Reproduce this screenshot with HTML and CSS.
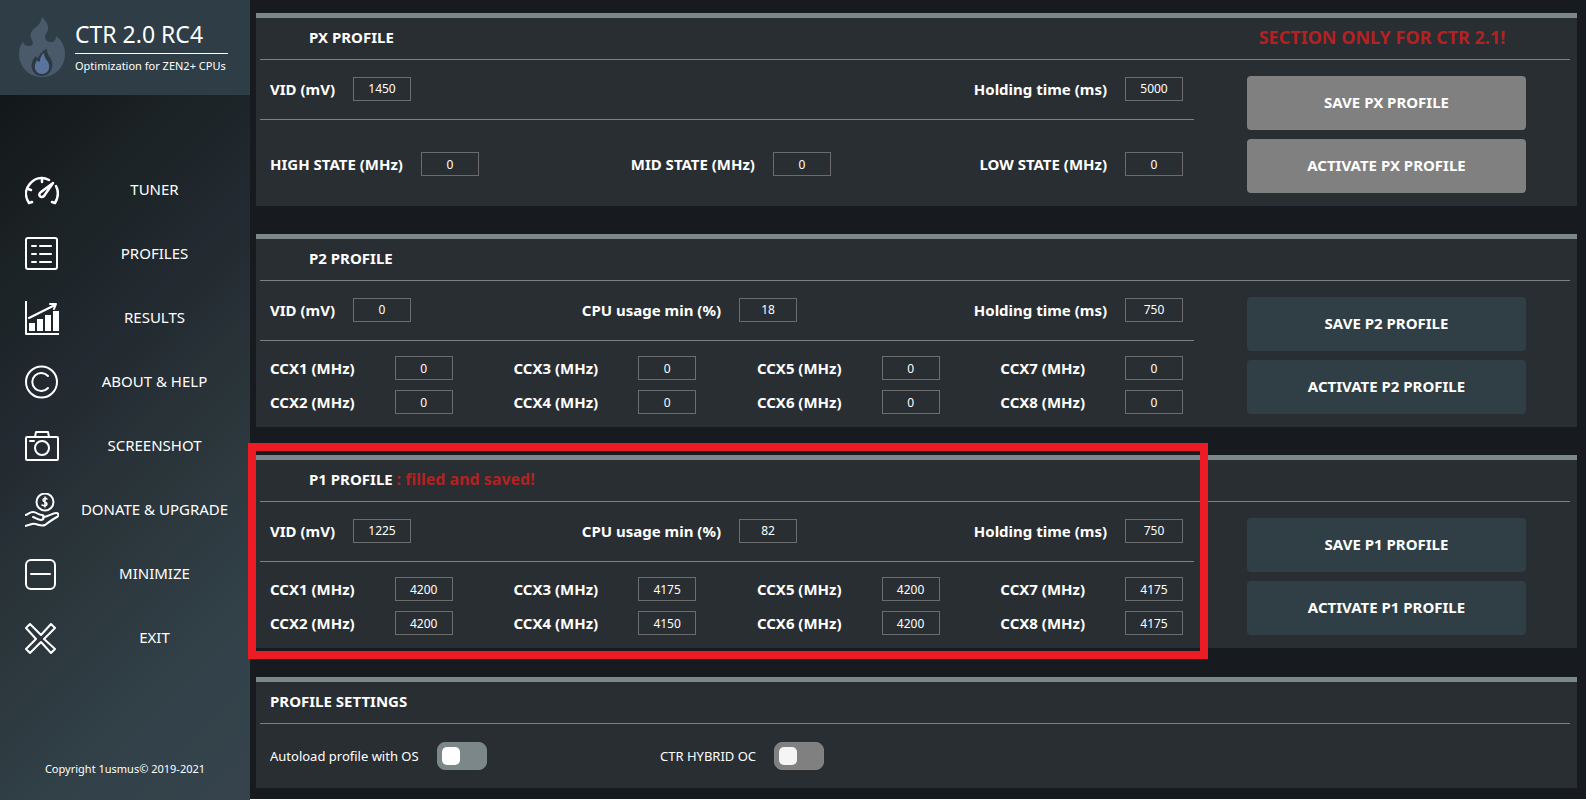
FILE: index.html
```html
<!DOCTYPE html>
<html lang="en">
<head>
	<meta charset="utf-8">
	<title>CTR 2.0 RC4</title>
	<link rel="stylesheet" href="styles.css">
</head>
<body>
<div class="app">
	<div class="sidebar">
		<div class="brand">
			<svg class="logo" viewBox="0 0 48 62" width="48" height="62">
				<path fill="#4a5a6a" d="M24 1c4 4 7 9 6 13c-1 3-3 4-3 7c0 3 3 5 6 5c3 0 5-2 5-6c6 4 9 11 9 18c0 13-10 23-23 23s-23-10-23-23c0-5 1-9 4-12c1 3 3 4 6 4c3 0 5-2 3-6c-2-3-2-6 0-9c3-4 9-6 10-14z"/>
				<path fill="#2c3942" d="M29 33c0 5 2 7 4 10c4 8-1 17-9 17s-13-8-9-16c1-2 2-3 3-4c1 2 1 2 2 2c2-3 4-8 9-9z"/>
				<path fill="#59739d" d="M26 37c0 4 2 6 4 9c3 6 0 12-6 12s-9-6-6-12l1-2c1 2 2 2 3 1c0-3 2-7 4-8z"/>
			</svg>
			<div class="brand_text">
				<h1>CTR 2.0 RC4</h1>
				<p>Optimization for ZEN2+ CPUs</p>
			</div>
		</div>
		<nav class="menu">
			<button type="button">
				<svg viewBox="0 0 34 34" width="34" height="34">
					<path class="thick" d="M7 29l-3 1C0 24 0 17 4 12C9 5 17 3 24 7M27 29l3 1c3-5 4-11 1-17"/>
					<path class="thick" d="M17 5v4M3 16l3 1"/>
					<path class="thick" d="M28 10L16 19c-4 3 0 7 3 4z"/>
				</svg>
				<span>TUNER</span>
			</button>
			<button type="button">
				<svg viewBox="0 0 34 34" width="34" height="34">
					<rect x="1" y="1" width="31" height="31" rx="2"/>
					<path d="M7 9h4M15 9h11M7 17h4M15 17h11M7 25h4M15 25h11"/>
				</svg>
				<span>PROFILES</span>
			</button>
			<button type="button">
				<svg viewBox="0 0 34 34" width="34" height="34">
					<path d="M1 0v33h33M4 17L30 4M25 3h6l-2 5"/>
					<path class="solid" d="M4 22h6v8H4zM12 18h6v12h-6zM20 14h6v16h-6zM28 10h6v20h-6z"/>
				</svg>
				<span>RESULTS</span>
			</button>
			<button type="button">
				<svg viewBox="0 0 34 34" width="34" height="34">
					<circle cx="16.500" cy="17" r="15.500"/>
					<path d="M23 11a9 9 0 1 0 0 12"/>
				</svg>
				<span>ABOUT &amp; HELP</span>
			</button>
			<button type="button">
				<svg viewBox="0 0 34 34" width="34" height="34">
					<rect x="1" y="8" width="32" height="23" rx="1"/>
					<path d="M10 8l1-5h12l1 5M5 12h4"/>
					<circle cx="17" cy="19" r="7"/>
				</svg>
				<span>SCREENSHOT</span>
			</button>
			<button type="button">
				<svg viewBox="0 0 34 34" width="34" height="34">
					<circle cx="20" cy="9" r="8.500"/>
					<path class="thin" d="M22 6c-1-1-4-1-4 1s4 2 4 4s-3 2-5 1M20 4v10"/>
					<path d="M0 22c3 0 4-3 8-3c4 0 5 3 9 3c3 0 2 5-1 5c-3 0-5-2-8-3M18 24c5 0 9-4 13-4c3 0 3 3 1 4c-4 2-8 5-12 8c-5 2-8-2-13-1l-7 2"/>
				</svg>
				<span>DONATE &amp; UPGRADE</span>
			</button>
			<button type="button">
				<svg viewBox="0 0 34 34" width="34" height="34">
					<rect x="1" y="3" width="29" height="29" rx="5"/>
					<path d="M6 17h19"/>
				</svg>
				<span>MINIMIZE</span>
			</button>
			<button type="button">
				<svg viewBox="0 0 34 34" width="34" height="34">
					<path d="M5 3l11 11L26 3l4 4l-11 11l11 10l-4 4l-10-11L5 32l-4-4l10-10L1 7z"/>
				</svg>
				<span>EXIT</span>
			</button>
		</nav>
		<p class="copyright">Copyright 1usmus© 2019-2021</p>
	</div>

	<div class="content">
		<section class="panel">
			<div class="panel_head">
				<h2>PX PROFILE</h2>
				<p class="notice">SECTION ONLY FOR CTR 2.1!</p>
			</div>
			<div class="panel_body">
				<div class="fields">
					<div class="row row_main">
						<div class="field"><label for="px_vid">VID (mV)</label><input type="text" id="px_vid" value="1450"></div>
						<div class="field"><label for="px_hold">Holding time (ms)</label><input type="text" id="px_hold" value="5000"></div>
					</div>
					<div class="row row_state">
						<div class="field"><label for="px_high">HIGH STATE (MHz)</label><input type="text" id="px_high" value="0"></div>
						<div class="field"><label for="px_mid">MID STATE (MHz)</label><input type="text" id="px_mid" value="0"></div>
						<div class="field"><label for="px_low">LOW STATE (MHz)</label><input type="text" id="px_low" value="0"></div>
					</div>
				</div>
				<div class="actions">
					<button type="button" class="btn btn_off">SAVE PX PROFILE</button>
					<button type="button" class="btn btn_off">ACTIVATE PX PROFILE</button>
				</div>
			</div>
		</section>

		<section class="panel">
			<div class="panel_head">
				<h2>P2 PROFILE</h2>
			</div>
			<div class="panel_body">
				<div class="fields">
					<div class="row row_main">
						<div class="field"><label for="p2_vid">VID (mV)</label><input type="text" id="p2_vid" value="0"></div>
						<div class="field"><label for="p2_cpu">CPU usage min (%)</label><input type="text" id="p2_cpu" value="18"></div>
						<div class="field"><label for="p2_hold">Holding time (ms)</label><input type="text" id="p2_hold" value="750"></div>
					</div>
					<div class="ccx">
						<div class="row">
							<div class="field"><label for="p2_ccx1">CCX1 (MHz)</label><input type="text" id="p2_ccx1" value="0"></div>
							<div class="field"><label for="p2_ccx3">CCX3 (MHz)</label><input type="text" id="p2_ccx3" value="0"></div>
							<div class="field"><label for="p2_ccx5">CCX5 (MHz)</label><input type="text" id="p2_ccx5" value="0"></div>
							<div class="field"><label for="p2_ccx7">CCX7 (MHz)</label><input type="text" id="p2_ccx7" value="0"></div>
						</div>
						<div class="row">
							<div class="field"><label for="p2_ccx2">CCX2 (MHz)</label><input type="text" id="p2_ccx2" value="0"></div>
							<div class="field"><label for="p2_ccx4">CCX4 (MHz)</label><input type="text" id="p2_ccx4" value="0"></div>
							<div class="field"><label for="p2_ccx6">CCX6 (MHz)</label><input type="text" id="p2_ccx6" value="0"></div>
							<div class="field"><label for="p2_ccx8">CCX8 (MHz)</label><input type="text" id="p2_ccx8" value="0"></div>
						</div>
					</div>
				</div>
				<div class="actions">
					<button type="button" class="btn">SAVE P2 PROFILE</button>
					<button type="button" class="btn">ACTIVATE P2 PROFILE</button>
				</div>
			</div>
		</section>

		<section class="panel">
			<div class="panel_head">
				<h2>P1 PROFILE <span class="status">: filled and saved!</span></h2>
			</div>
			<div class="panel_body">
				<div class="fields">
					<div class="row row_main">
						<div class="field"><label for="p1_vid">VID (mV)</label><input type="text" id="p1_vid" value="1225"></div>
						<div class="field"><label for="p1_cpu">CPU usage min (%)</label><input type="text" id="p1_cpu" value="82"></div>
						<div class="field"><label for="p1_hold">Holding time (ms)</label><input type="text" id="p1_hold" value="750"></div>
					</div>
					<div class="ccx">
						<div class="row">
							<div class="field"><label for="p1_ccx1">CCX1 (MHz)</label><input type="text" id="p1_ccx1" value="4200"></div>
							<div class="field"><label for="p1_ccx3">CCX3 (MHz)</label><input type="text" id="p1_ccx3" value="4175"></div>
							<div class="field"><label for="p1_ccx5">CCX5 (MHz)</label><input type="text" id="p1_ccx5" value="4200"></div>
							<div class="field"><label for="p1_ccx7">CCX7 (MHz)</label><input type="text" id="p1_ccx7" value="4175"></div>
						</div>
						<div class="row">
							<div class="field"><label for="p1_ccx2">CCX2 (MHz)</label><input type="text" id="p1_ccx2" value="4200"></div>
							<div class="field"><label for="p1_ccx4">CCX4 (MHz)</label><input type="text" id="p1_ccx4" value="4150"></div>
							<div class="field"><label for="p1_ccx6">CCX6 (MHz)</label><input type="text" id="p1_ccx6" value="4200"></div>
							<div class="field"><label for="p1_ccx8">CCX8 (MHz)</label><input type="text" id="p1_ccx8" value="4175"></div>
						</div>
					</div>
				</div>
				<div class="actions">
					<button type="button" class="btn">SAVE P1 PROFILE</button>
					<button type="button" class="btn">ACTIVATE P1 PROFILE</button>
				</div>
			</div>
			<div class="highlight"></div>
		</section>

		<section class="panel panel_settings">
			<div class="panel_head">
				<h2>PROFILE SETTINGS</h2>
			</div>
			<div class="settings">
				<div class="setting"><label for="autoload">Autoload profile with OS</label><input type="checkbox" class="switch" id="autoload"></div>
				<div class="setting"><label for="hybrid">CTR HYBRID OC</label><input type="checkbox" class="switch switch_off" id="hybrid"></div>
			</div>
		</section>
	</div>
</div>
</body>
</html>
```
FILE: styles.css
```css
*{
	box-sizing: border-box;
}

body,h1,h2,p{
	margin: 0;
	padding: 0;
}

body,button,input{
	font-family: "Noto Sans", "Open Sans", sans-serif;
	color: #fff;
}

body{
	background: #fff;
}

.app{
	display: flex;
	min-height: 100vh;
}

/* sidebar */
.sidebar{
	display: flex;
	flex-direction: column;
	flex: none;
	width: 250px;
	background: linear-gradient(135deg, #13181a 10%, #1b2224 25%, #222930 42%, #2a353a 60%, #33424a 85%, #36434c);
}
.brand{
	display: flex;
	gap: 9px;
	height: 95px;
	padding: 16px 22px 0 18px;
	background: #2f3d46;
}
.logo{
	flex: none;
}
.brand_text{
	flex: 1;
	white-space: nowrap;
}
.brand h1{
	padding-bottom: 1px;
	border-bottom: 1px solid #fff;
	font-size: 23px;
	line-height: 36px;
	font-weight: 400;
}
.brand p{
	font-size: 11px;
	line-height: 24px;
}
.menu{
	display: flex;
	flex-direction: column;
	margin-top: 63px;
}
.menu button{
	display: flex;
	align-items: center;
	height: 64px;
	padding: 0 0 0 25px;
	border: 0;
	background: none;
	font-size: 15px;
}
.menu span{
	flex: 1;
	padding-bottom: 2px;
	text-align: center;
}
.menu svg{
	flex: none;
	fill: none;
	stroke: #fff;
	stroke-width: 2;
	stroke-linecap: round;
	stroke-linejoin: round;
}
.menu .thick{
	stroke-width: 2.500;
}
.menu .thin{
	stroke-width: 1.500;
}
.menu .solid{
	fill: #fff;
	stroke: none;
}
.copyright{
	margin-top: auto;
	padding-bottom: 23px;
	font-size: 11px;
	line-height: 16px;
	text-align: center;
}

/* panels */
.content{
	display: flex;
	flex-direction: column;
	flex: 1;
	gap: 28px;
	margin-bottom: 1px;
	padding: 13px 9px 11px 6px;
	background: #171b1f;
}
.panel{
	position: relative;
	padding: 0 7px 0 4px;
	border-top: 5px solid #7b8788;
	background: #292e32;
}
.panel_head{
	display: flex;
	justify-content: space-between;
	height: 42px;
	padding-left: 49px;
	border-bottom: 1px solid #7b8283;
	line-height: 38px;
}
.panel_settings{
	margin-top: auto;
}
.panel_settings .panel_head{
	padding-left: 10px;
}
.panel h2{
	font-size: 15px;
	font-weight: 700;
}
.status,.notice{
	color: #b22222;
}
.status{
	font-size: 16px;
}
.notice{
	width: 376px;
	font-size: 18px;
	font-weight: 700;
	text-align: center;
}
.panel_body{
	display: flex;
}
.fields{
	flex: 1;
}
.row{
	display: flex;
	padding: 0 11px 0 10px;
}
.row_main{
	align-items: center;
	height: 60px;
	padding-bottom: 2px;
	border-bottom: 1px solid #7b8283;
}
.row_state{
	padding-top: 32px;
	padding-bottom: 30px;
}
.ccx{
	display: flex;
	flex-direction: column;
	gap: 10px;
	padding: 15px 0 13px;
}
.field{
	display: flex;
	align-items: center;
	gap: 18px;
	font-size: 15px;
	font-weight: 700;
	line-height: 24px;
	white-space: nowrap;
}
.field + .field{
	flex: 1;
	justify-content: flex-end;
}
.ccx .field{
	gap: 40px;
}
.field input{
	width: 58px;
	height: 24px;
	padding: 0;
	border: 1px solid #6c6c6c;
	background: none;
	font-size: 12px;
	text-align: center;
}
.actions{
	display: flex;
	flex-direction: column;
	gap: 9px;
	width: 376px;
	padding: 16px 44px 0 53px;
}
.btn{
	height: 54px;
	padding: 0 0 2px;
	border: 0;
	border-radius: 4px;
	background: #303f46;
	font-size: 15px;
	font-weight: 700;
}
.btn_off{
	background: #808080;
}

/* frame drawn round the saved profile */
.highlight{
	position: absolute;
	top: -17px;
	right: 369px;
	bottom: -11px;
	left: -8px;
	border: 8px solid #ed1c24;
	pointer-events: none;
}

.settings{
	display: grid;
	grid-template-columns: 30% 70%;
	height: 64px;
	padding-left: 10px;
}
.setting{
	display: flex;
	align-items: center;
	gap: 18px;
	font-size: 13px;
}
.switch{
	appearance: none;
	width: 50px;
	height: 28px;
	margin: 0;
	padding: 4px;
	border: 1px solid #7b8788;
	border-radius: 8px;
	background: #7b8788;
}
.switch:before{
	content: "";
	display: block;
	width: 18px;
	height: 18px;
	border-radius: 5px;
	background: #fff;
}
.switch:checked:before{
	margin-left: auto;
}
.switch_off{
	background: #808080;
}
.switch_off:before{
	background: #f5f5f5;
}
```
